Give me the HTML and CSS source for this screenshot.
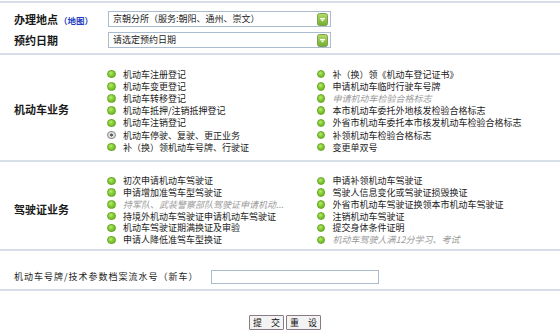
FILE: index.html
```html
<!DOCTYPE html>
<html lang="zh-CN">
<head>
<meta charset="utf-8">
<title>预约</title>
<link rel="stylesheet" href="styles.css">
</head>
<body>
<div class="page">
  <section class="sec sec-top">
    <div class="frow">
      <div class="lbl">办理地点<span class="map">（地图）</span></div>
      <div class="sel"><span class="sel-text">京朝分所（服务:朝阳、通州、崇文）</span>
        <svg class="drop" width="11" height="13" viewBox="0 0 11 13"><defs><linearGradient id="g1" x1="0" y1="0" x2="0" y2="1"><stop offset="0" stop-color="#b4dc6a"/><stop offset="1" stop-color="#6fae2c"/></linearGradient></defs><rect x="0.5" y="0.5" width="10" height="12" rx="2" fill="url(#g1)" stroke="#7f9f5a"/><rect x="3" y="5" width="5" height="1.2" fill="#fff"/><path d="M3.5 6.6 L7.5 6.6 L5.5 8.4 Z" fill="#fff"/></svg>
      </div>
    </div>
    <div class="frow">
      <div class="lbl">预约日期</div>
      <div class="sel"><span class="sel-text">请选定预约日期</span>
        <svg class="drop" width="11" height="13" viewBox="0 0 11 13"><defs><linearGradient id="g2" x1="0" y1="0" x2="0" y2="1"><stop offset="0" stop-color="#b4dc6a"/><stop offset="1" stop-color="#6fae2c"/></linearGradient></defs><rect x="0.5" y="0.5" width="10" height="12" rx="2" fill="url(#g2)" stroke="#7f9f5a"/><rect x="3" y="5" width="5" height="1.2" fill="#fff"/><path d="M3.5 6.6 L7.5 6.6 L5.5 8.4 Z" fill="#fff"/></svg>
      </div>
    </div>
  </section>

  <section class="sec sec-veh">
    <div class="sec-lbl">机动车业务</div>
    <ul class="opts opts-veh">
      <li><i class="rd"></i>机动车注册登记</li>
      <li><i class="rd"></i>机动车变更登记</li>
      <li><i class="rd"></i>机动车转移登记</li>
      <li><i class="rd"></i>机动车抵押/注销抵押登记</li>
      <li><i class="rd"></i>机动车注销登记</li>
      <li><i class="rd on"></i>机动车停驶、复驶、更正业务</li>
      <li><i class="rd"></i>补（换）领机动车号牌、行驶证</li>
      <li><i class="rd"></i>补（换）领《机动车登记证书》</li>
      <li><i class="rd"></i>申请机动车临时行驶车号牌</li>
      <li class="dis"><i class="rd"></i>申请机动车检验合格标志</li>
      <li><i class="rd"></i>本市机动车委托外地核发检验合格标志</li>
      <li><i class="rd"></i>外省市机动车委托本市核发机动车检验合格标志</li>
      <li><i class="rd"></i>补领机动车检验合格标志</li>
      <li><i class="rd"></i>变更单双号</li>
    </ul>
  </section>

  <section class="sec sec-drv">
    <div class="sec-lbl">驾驶证业务</div>
    <ul class="opts opts-drv">
      <li><i class="rd"></i>初次申请机动车驾驶证</li>
      <li><i class="rd"></i>申请增加准驾车型驾驶证</li>
      <li class="dis"><i class="rd"></i>持军队、武装警察部队驾驶证申请机动...</li>
      <li><i class="rd"></i>持境外机动车驾驶证申请机动车驾驶证</li>
      <li><i class="rd"></i>机动车驾驶证期满换证及审验</li>
      <li><i class="rd"></i>申请人降低准驾车型换证</li>
      <li><i class="rd"></i>申请补领机动车驾驶证</li>
      <li><i class="rd"></i>驾驶人信息变化或驾驶证损毁换证</li>
      <li><i class="rd"></i>外省市机动车驾驶证换领本市机动车驾驶证</li>
      <li><i class="rd"></i>注销机动车驾驶证</li>
      <li><i class="rd"></i>提交身体条件证明</li>
      <li class="dis"><i class="rd"></i>机动车驾驶人满12分学习、考试</li>
    </ul>
  </section>

  <section class="sec sec-plate">
    <span class="plate-lbl">机动车号牌/技术参数档案流水号（新车）</span>
    <span class="plate-input"></span>
  </section>

  <div class="btns">
    <button class="btn" type="button">提　交</button>
    <button class="btn" type="button">重　设</button>
  </div>
</div>
</body>
</html>
```

FILE: styles.css
```css
html, body {
  margin: 0;
  padding: 0;
  background: #fff;
}
body {
  font-family: "Noto Sans CJK SC", "Liberation Sans", sans-serif;
  font-size: 9px;
  color: #222;
  width: 560px;
  height: 334px;
  overflow: hidden;
}
.page {
  margin-top: 1px;
  border-top: 2px solid #d6dfe8;
}
.sec {
  border-bottom: 2px solid #d6dfe8;
}
.sec-top {
  padding: 8px 0 5px 0;
  display: flex;
  flex-direction: column;
  gap: 5px;
}
.frow {
  display: flex;
  align-items: center;
  height: 16px;
}
.lbl {
  width: 94px;
  padding-left: 14px;
  font-size: 11px;
  font-weight: bold;
  color: #1a1a1a;
  white-space: nowrap;
}
.map {
  font-size: 8.5px;
  color: #1f3fc0;
  margin-left: 1px;
}
.sel {
  box-sizing: border-box;
  width: 223px;
  height: 16px;
  border: 1px solid #aabdd0;
  display: flex;
  align-items: center;
  justify-content: space-between;
  padding: 0 2px 0 4px;
  background: #fff;
}
.sel-text {
  font-size: 9px;
  color: #222;
  line-height: 14px;
}
.drop {
  display: block;
}
.sec-veh {
  padding: 13px 0 6.6px 0;
  display: flex;
  align-items: center;
}
.sec-drv {
  padding: 13px 0 3.2px 0;
  display: flex;
  align-items: center;
}
.sec-lbl {
  width: 93px;
  padding-left: 14px;
  font-size: 11px;
  font-weight: bold;
  color: #1a1a1a;
  margin-top: -3px;
}
.opts {
  list-style: none;
  margin: 0;
  padding: 0;
  display: grid;
  grid-auto-flow: column;
  grid-template-columns: 209.5px 230px;
}
.opts-veh {
  grid-template-rows: repeat(7, 12.2px);
}
.opts-drv {
  grid-template-rows: repeat(6, 11.8px);
}
.opts li {
  display: flex;
  align-items: center;
  gap: 7.5px;
  white-space: nowrap;
  line-height: 11px;
  color: #222;
}
.opts li.dis {
  color: #9a9a9a;
  font-style: italic;
}
.rd {
  box-sizing: border-box;
  width: 8.5px;
  height: 8.5px;
  border-radius: 50%;
  border: 1px solid #6aa52a;
  background: radial-gradient(circle at 40% 35%, #b8ec6c 0, #84cc34 45%, #5ea81e 100%);
  flex: none;
}
.rd.on {
  border: 1px solid #8a8a8a;
  background: radial-gradient(circle, #606060 0, #606060 1.3px, #e4e4e4 1.8px, #cfcfcf 100%);
}
.sec-plate {
  padding: 19px 0 5px 14px;
  display: flex;
  align-items: center;
  gap: 10px;
}
.plate-lbl {
  font-size: 9px;
  letter-spacing: 1px;
  color: #222;
  line-height: 14px;
  width: 187px;
  white-space: nowrap;
}
.plate-input {
  box-sizing: border-box;
  width: 168px;
  height: 14px;
  border: 1px solid #aabdd0;
  background: #fff;
}
.btns {
  display: flex;
  justify-content: center;
  gap: 2px;
  margin-top: 24px;
  padding-left: 10px;
}
.btn {
  box-sizing: border-box;
  height: 15px;
  width: 35px;
  padding: 0;
  font-family: "Noto Sans CJK SC", sans-serif;
  font-size: 9px;
  line-height: 13px;
  color: #111;
  background: #f3f3f3;
  border: 1px solid #8a7a86;
  border-radius: 1px;
}
```
